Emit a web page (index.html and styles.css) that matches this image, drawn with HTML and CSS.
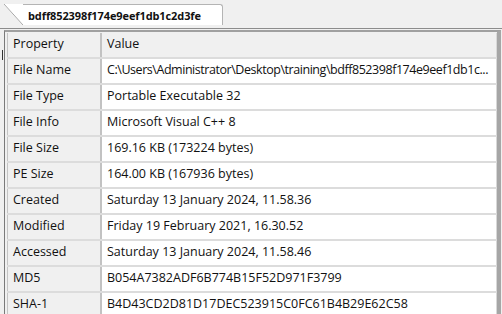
FILE: index.html
```html
<!DOCTYPE html>
<html lang="en">
<head>
  <meta charset="UTF-8">
  <title>File Properties</title>
  <link rel="stylesheet" href="styles.css">
</head>
<body>
  <div class="tab-strip">
    <div class="tab">bdff852398f174e9eef1db1c2d3fe</div>
  </div>

  <div class="panel">
    <table class="props">
      <tr class="head"><td class="key">Property</td><td class="val">Value</td></tr>
      <tr><td class="key">File Name</td><td class="val path">C:\Users\Administrator\Desktop\training\bdff852398f174e9eef1db1c...</td></tr>
      <tr><td class="key">File Type</td><td class="val">Portable Executable 32</td></tr>
      <tr><td class="key">File Info</td><td class="val">Microsoft Visual C++ 8</td></tr>
      <tr><td class="key">File Size</td><td class="val">169.16 KB (173224 bytes)</td></tr>
      <tr><td class="key">PE Size</td><td class="val">164.00 KB (167936 bytes)</td></tr>
      <tr><td class="key">Created</td><td class="val">Saturday 13 January 2024, 11.58.36</td></tr>
      <tr><td class="key">Modified</td><td class="val">Friday 19 February 2021, 16.30.52</td></tr>
      <tr><td class="key">Accessed</td><td class="val">Saturday 13 January 2024, 11.58.46</td></tr>
      <tr><td class="key">MD5</td><td class="val">B054A7382ADF6B774B15F52D971F3799</td></tr>
      <tr><td class="key">SHA-1</td><td class="val">B4D43CD2D81D17DEC523915C0FC61B4B29E62C58</td></tr>
    </table>
  </div>
</body>
</html>
```

FILE: styles.css
```css
body {
  margin: 0;
  background: #f0f0f0;
  font-family: "Open Sans", "Noto Sans", sans-serif;
  font-size: 12.5px;
  color: #111;
  overflow: hidden;
}

/* tab header */
.tab-strip {
  height: 24px;
  border-bottom: 1px solid #8c8c8c;
  padding-left: 23px;
}
.tab {
  position: relative;
  box-sizing: border-box;
  width: 200px;
  height: 21px;
  margin-top: 4px;
  padding: 3px 0 0 5px;
  background: #fff;
  border-top: 1px solid #b4b4b4;
  border-right: 1px solid #b4b4b4;
  border-top-right-radius: 3px;
  font-weight: bold;
  font-size: 11px;
  letter-spacing: -0.1px;
}
.tab::before {
  content: "";
  position: absolute;
  left: -19px;
  top: -1px;
  width: 19px;
  height: 21px;
  background: linear-gradient(to top right, transparent calc(50% - 0.7px), #a8a8a8 50%, #fff calc(50% + 0.7px));
}

/* property grid */
.panel {
  position: relative;
  margin: 1px 1px 0 4px;
  border-top: 2px solid #a0a0a0;
  border-left: 1px solid #7a7a7a;
  border-right: 4px solid #a6a6a6;
  padding: 1px 0 0 2px;
  height: 300px;
}
/* splitter grip left of the grid */
.panel::before {
  content: "";
  position: absolute;
  left: -3px;
  top: 18px;
  width: 1px;
  height: 10px;
  background: #333;
}
.props {
  width: 100%;
  border-collapse: collapse;
  table-layout: fixed;
  border-left: 1px solid #c4c4c4;
}
.props td {
  height: 21px;
  padding: 0 5px 3px;
  border-bottom: 2px solid #dcdcdc;
  white-space: nowrap;
  overflow: hidden;
  vertical-align: middle;
}
.key {
  width: 82px;
  background: #f0f0f0;
  border-right: 2px solid #c2c2c2;
}
.val {
  background: #fff;
  border-right: 1px solid #d8d8d8;
}
.path {
  letter-spacing: -0.45px;
}
.head td {
  background: #f0f0f0;
}
```
